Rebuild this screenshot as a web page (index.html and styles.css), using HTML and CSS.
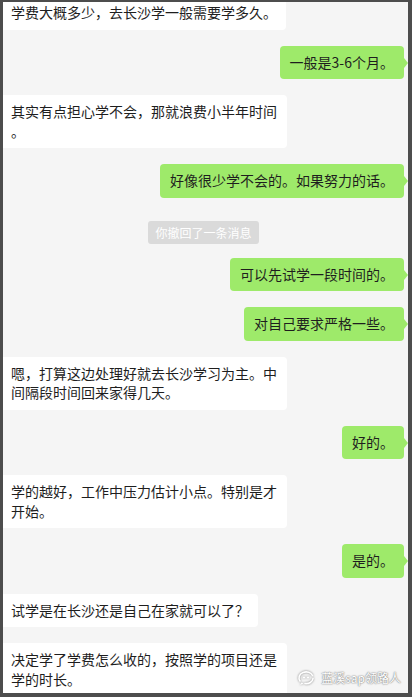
FILE: index.html
```html
<!DOCTYPE html>
<html lang="zh-CN">
<head>
    <meta charset="UTF-8">
    <meta name="viewport" content="width=device-width, initial-scale=1.0">
    <title>聊天记录</title>
    <link rel="stylesheet" href="styles.css">
</head>
<body>
    <div class="frame">
        <div class="chat">
            <div class="msg left">学费大概多少，去长沙学一般需要学多久。</div>
            <div class="msg right">一般是3-6个月。</div>
            <div class="msg left">其实有点担心学不会，那就浪费小半年时间。</div>
            <div class="msg right">好像很少学不会的。如果努力的话。</div>
            <div class="notice">你撤回了一条消息</div>
            <div class="msg right">可以先试学一段时间的。</div>
            <div class="msg right">对自己要求严格一些。</div>
            <div class="msg left">嗯，打算这边处理好就去长沙学习为主。中间隔段时间回来家得几天。</div>
            <div class="msg right">好的。</div>
            <div class="msg left">学的越好，工作中压力估计小点。特别是才开始。</div>
            <div class="msg right">是的。</div>
            <div class="msg left">试学是在长沙还是自己在家就可以了？</div>
            <div class="msg left">决定学了学费怎么收的，按照学的项目还是学的时长。</div>
        </div>

        <!-- 公众号水印 -->
        <div class="watermark">
            <svg class="wm-icon" width="18" height="16" viewBox="0 0 18 16">
                <path d="M3 11 C1 8 2 4 6 2.5 C10 1 14 2.5 15.5 5.5" fill="none" stroke="#fff" stroke-width="1.6" stroke-linecap="round"/>
                <path d="M16 8.5 C15.5 12 12 14 8 13.5" fill="none" stroke="#fff" stroke-width="1.6" stroke-linecap="round"/>
                <circle cx="7" cy="7.5" r="1.1" fill="#fff"/>
                <circle cx="11" cy="7.5" r="1.1" fill="#fff"/>
                <path d="M4.5 12.5 L3 15 L6.5 13.5" fill="#fff"/>
            </svg>
            <span>蓝溪sap领路人</span>
        </div>
    </div>
</body>
</html>
```

FILE: styles.css
```css
html, body {
    margin: 0;
    padding: 0;
}
body {
    font-family: "Noto Sans CJK SC", "Noto Sans", sans-serif;
    background-color: #4d4d4d;
}
.frame {
    position: relative;
    box-sizing: border-box;
    width: 412px;
    height: 697px;
    border-style: solid;
    border-color: #4d4d4d;
    border-width: 2px 4px 4px 3px;
    background-color: #f5f5f5;
    overflow: hidden;
}
.chat {
    display: flex;
    flex-direction: column;
    gap: 16px;
    margin-top: -6px;
}
.msg {
    position: relative;
    box-sizing: border-box;
    font-size: 14px;
    line-height: 19.5px;
    color: #1e1e1e;
    padding: 7px 10px;
    border-radius: 4px;
    line-break: anywhere;
}
.msg.left {
    align-self: flex-start;
    max-width: 284px;
    padding: 7px 9px 7px 8px;
    background-color: #fff;
    border-radius: 0 4px 4px 0;
}
.msg.right {
    align-self: flex-end;
    margin-right: 4px;
    background-color: #9eea6a;
}
.msg.right::after {
    content: "";
    position: absolute;
    right: -4px;
    top: 12px;
    border-style: solid;
    border-width: 5px 0 5px 4px;
    border-color: transparent transparent transparent #9eea6a;
}
.notice {
    align-self: center;
    margin: 7px 0 -2px -4px;
    padding: 3px 7px;
    font-size: 12px;
    line-height: 17px;
    color: #fff;
    background-color: #dadada;
    border-radius: 3px;
}
.watermark {
    position: absolute;
    right: 7px;
    bottom: 7px;
    display: flex;
    align-items: center;
    gap: 6px;
    font-size: 12px;
    color: #fff;
    text-shadow: 0 0 2px #888, 0 0 1px #666;
}
.wm-icon {
    filter: drop-shadow(0 0 1px #777);
}
```
